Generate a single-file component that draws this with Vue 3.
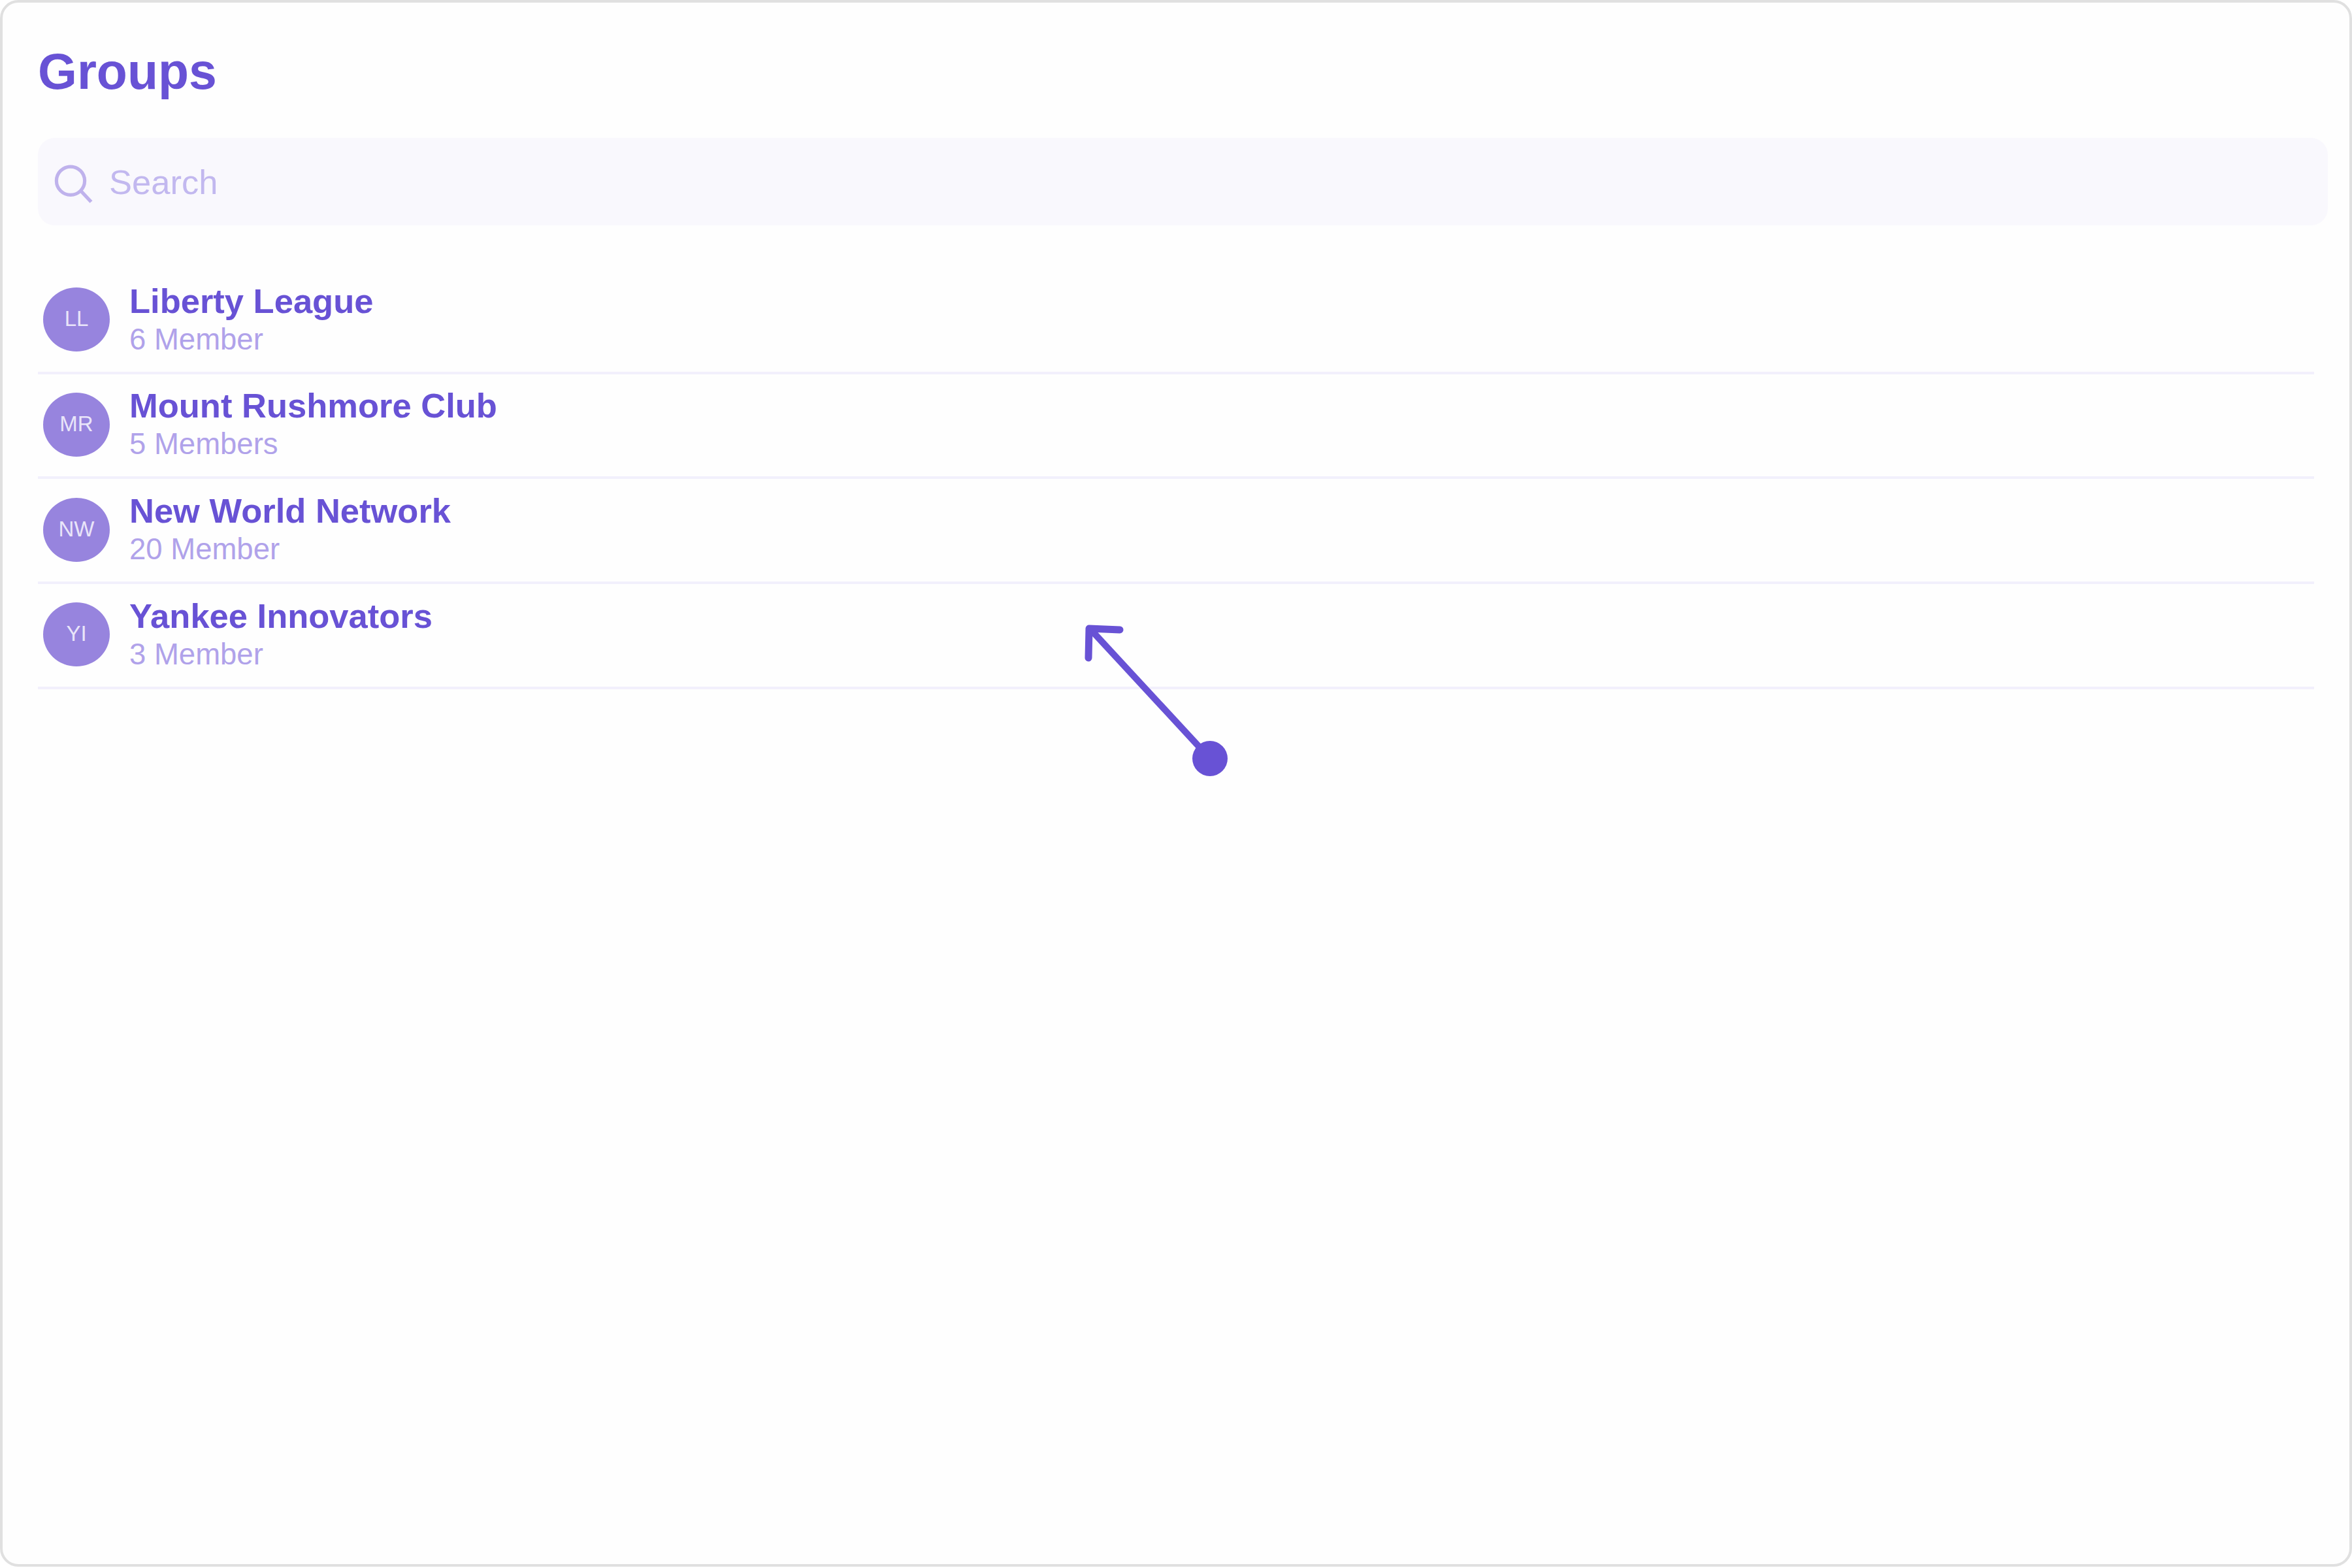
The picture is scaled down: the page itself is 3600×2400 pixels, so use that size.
<script setup>
const groups = [
  { initials: 'LL', name: 'Liberty League', members: '6 Member' },
  { initials: 'MR', name: 'Mount Rushmore Club', members: '5 Members' },
  { initials: 'NW', name: 'New World Network', members: '20 Member' },
  { initials: 'YI', name: 'Yankee Innovators', members: '3 Member' },
]
</script>

<template>
  <div class="frame">
    <h1 class="title">Groups</h1>
    <div class="search">
      <svg class="search-icon" width="64" height="64" viewBox="0 0 64 64" fill="none">
        <circle cx="25" cy="28.7" r="21.6" stroke="#bfb2ec" stroke-width="5.2" />
        <path d="M41.5 45 L56.5 61" stroke="#bfb2ec" stroke-width="5.4" />
      </svg>
      <span class="placeholder">Search</span>
    </div>
    <ul class="list">
      <li v-for="g in groups" :key="g.initials" class="row">
        <div class="avatar">{{ g.initials }}</div>
        <div class="text">
          <div class="name">{{ g.name }}</div>
          <div class="members">{{ g.members }}</div>
        </div>
      </li>
    </ul>
    <svg class="arrow" width="3600" height="2400" viewBox="0 0 3600 2400" fill="none">
      <path d="M1852 1161 L1668 962" stroke="#6852d5" stroke-width="10" />
      <path d="M1714 964 L1667 962 L1666 1007" stroke="#6852d5" stroke-width="11" stroke-linecap="round" stroke-linejoin="round" />
      <circle cx="1852" cy="1161" r="27" fill="#6852d5" />
    </svg>
  </div>
</template>

<style scoped>
.frame {
  position: relative;
  box-sizing: border-box;
  width: 3600px;
  height: 2398px;
  border: 4px solid #e0e0e0;
  border-radius: 28px;
  background: #fefefe;
  padding: 62px 33px 0 54px;
  font-family: "Liberation Sans", Arial, sans-serif;
  overflow: hidden;
}
.title {
  margin: 0;
  font-size: 77px;
  line-height: 87px;
  font-weight: 700;
  color: #6852d5;
}
.search {
  display: flex;
  align-items: center;
  height: 134px;
  margin-top: 58px;
  padding-left: 25px;
  gap: 20px;
  background: #f9f8fd;
  border-radius: 26px;
}
.search-icon {
  flex: none;
  margin-top: 4px;
}
.placeholder {
  font-size: 52.5px;
  color: #c2b8ef;
}
.list {
  list-style: none;
  margin: 67px 21px 0 0;
  padding: 0;
}
.row {
  box-sizing: border-box;
  display: flex;
  align-items: center;
  height: 160.67px;
  border-bottom: 4px solid #f2f0fc;
  padding: 0 0 2px 8px;
  gap: 30px;
}
.avatar {
  flex: none;
  box-sizing: border-box;
  display: flex;
  align-items: center;
  justify-content: center;
  width: 102px;
  height: 98px;
  padding-bottom: 2px;
  border-radius: 50%;
  background: #9784de;
  color: #e9e5f9;
  font-size: 33px;
}
.text {
  margin-top: 4px;
}
.name {
  font-size: 52.5px;
  line-height: 56px;
  font-weight: 700;
  color: #6852d5;
}
.members {
  font-size: 45.5px;
  line-height: 61px;
  color: #b0a2ea;
}
.arrow {
  position: absolute;
  left: -4px;
  top: -4px;
  pointer-events: none;
}
</style>
